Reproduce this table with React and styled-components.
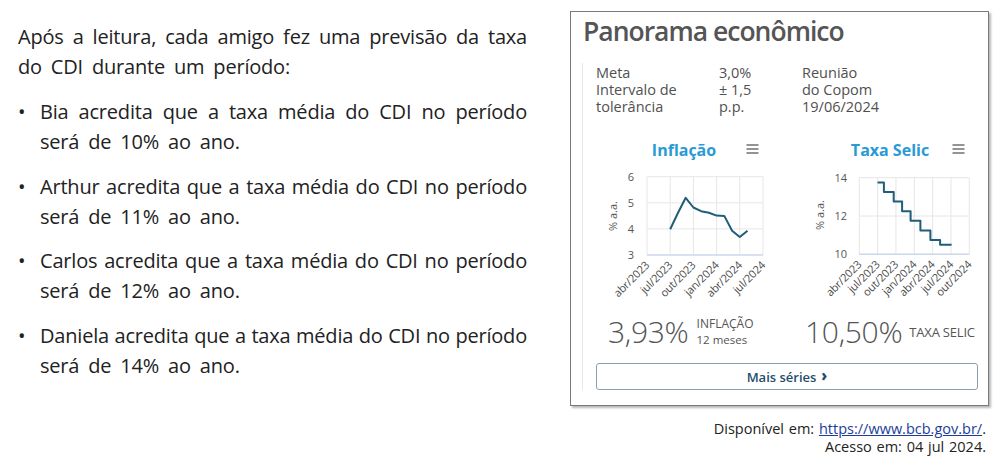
import React from "react";
import styled, { createGlobalStyle } from "styled-components";

const Global = createGlobalStyle`
  html, body { margin: 0; padding: 0; background: #fff; }
  body { font-family: "Open Sans", "Noto Sans", sans-serif; }
`;

const Page = styled.div`
  display: flex;
  align-items: flex-start;
  gap: 43px;
  padding-left: 18px;
  width: 1008px;
  height: 457px;
  box-sizing: border-box;
  overflow: hidden;
`;

const TextColumn = styled.div`
  width: 509px;
  margin-top: 22px;
  font-family: "Open Sans", sans-serif;
  font-size: 20px;
  line-height: 30px;
  color: #222;
  letter-spacing: -0.2px;
`;

const Para = styled.p`
  margin: 0;
`;

const Line = styled.span`
  display: block;
  text-align: justify;
  text-align-last: ${(p) => (p.$last ? "left" : "justify")};
  word-spacing: ${(p) => (p.$last ? "4px" : "0")};
`;

const List = styled.ul`
  list-style: none;
  margin: 15px 0 0;
  padding: 0;
  display: flex;
  flex-direction: column;
  gap: 14.5px;
`;

const Item = styled.li`
  display: flex;
`;

const Bullet = styled.span`
  flex: 0 0 22px;
`;

const ItemBody = styled.div`
  flex: 1;
`;

const Side = styled.div`
  margin-top: 11px;
  width: 419px;
  display: flex;
  flex-direction: column;
`;

const Panel = styled.section`
  box-sizing: border-box;
  width: 419px;
  height: 395px;
  border: 1px solid #7a7a7a;
  box-shadow: 2px 2px 2px rgba(0, 0, 0, 0.28);
  padding: 3px 10px 0 11px;
  background: #fff;
  font-family: "Open Sans", sans-serif;
  color: #555;
`;

const Title = styled.h1`
  margin: 0;
  padding-left: 1px;
  font-size: 26.5px;
  line-height: 32px;
  font-weight: 600;
  color: #555;
  letter-spacing: -1px;
`;

const Block = styled.div`
  margin-top: 16px;
  border-left: 1px solid #e8e8e8;
  padding: 1px 0 0 13px;
`;

const InfoGrid = styled.div`
  display: grid;
  grid-template-columns: 123px 83px auto;
  font-size: 14.5px;
  line-height: 17px;
  color: #505050;
`;

const ChartsRow = styled.div`
  display: flex;
  gap: 34px;
  margin-top: 25px;
  padding-left: 2px;
`;

const ChartCard = styled.div`
  width: 172px;
  display: flex;
  flex-direction: column;
`;

const ChartHead = styled.div`
  display: grid;
  grid-template-columns: 1fr auto 1fr;
  align-items: center;
  height: 20px;
  margin-bottom: 5px;
`;

const ChartTitle = styled.span`
  grid-column: 2;
  font-size: 16px;
  font-weight: 700;
  color: #2a9ad6;
  line-height: 20px;
`;

const MenuIcon = styled.svg`
  grid-column: 3;
  justify-self: end;
  margin-right: 11px;
  margin-top: -3px;
`;

const StatsRow = styled.div`
  display: grid;
  grid-template-columns: 209px 1fr;
  align-items: center;
  margin-top: 4px;
`;

const Stat = styled.div`
  display: flex;
  align-items: center;
  gap: ${(p) => p.$gap}px;
  padding-left: ${(p) => p.$indent}px;
  white-space: nowrap;
`;

const BigValue = styled.span`
  font-size: 30px;
  font-weight: 300;
  line-height: 36px;
  color: #555;
  letter-spacing: -0.3px;
`;

const StatLabel = styled.span`
  display: flex;
  flex-direction: column;
  font-size: ${(p) => p.$size}px;
  line-height: 16px;
  color: #555;
  letter-spacing: ${(p) => p.$track}px;
`;

const LabelLine = styled.span`
  display: block;
  height: ${(p) => p.$h}px;
  line-height: 16px;
`;

const SubLabel = styled.span`
  display: block;
  font-size: 11.5px;
  line-height: 16px;
  letter-spacing: 0;
`;

const MoreButton = styled.button`
  display: flex;
  align-items: center;
  justify-content: center;
  gap: 5px;
  width: 100%;
  height: 27px;
  margin-top: 13px;
  box-sizing: border-box;
  border: 1px solid #8d9eb0;
  border-radius: 3px;
  background: #fff;
  font-family: "Open Sans", sans-serif;
  font-size: 13px;
  font-weight: 600;
  color: #1e4e6c;
  padding: 0;
`;

const Chevron = styled.span`
  font-weight: 800;
  font-size: 15px;
  line-height: 13px;
  margin-top: -2px;
`;

const Citation = styled.div`
  margin-top: 14px;
  padding-right: 3px;
  text-align: right;
  font-family: "Open Sans", sans-serif;
  font-size: 14.5px;
  line-height: 18px;
  word-spacing: 1px;
  color: #222;
`;

const Link = styled.a`
  color: #1b3d9c;
  text-decoration: underline;
`;

const Menu = () => (
  <MenuIcon width="13" height="10" viewBox="0 0 13 10">
    <g stroke="#666" strokeWidth="1.4">
      <line x1="0.5" y1="1" x2="12.5" y2="1" />
      <line x1="0.5" y1="5" x2="12.5" y2="5" />
      <line x1="0.5" y1="9" x2="12.5" y2="9" />
    </g>
  </MenuIcon>
);

const AXIS_FONT = { fontFamily: "'Open Sans', sans-serif", fontSize: 11, fill: "#555" };
const XLABEL_FONT = {
  fontFamily: "'Open Sans', sans-serif",
  fontSize: 11,
  fill: "#4a4a4a",
  letterSpacing: "-0.2px",
};

function Plot({ x0, x1, y0, y1, xLabels, yTicks, yMin, yMax, yLabelX, yTitleX, yTitleY, path }) {
  const xs = xLabels.map((_, i) => x0 + ((x1 - x0) * i) / (xLabels.length - 1));
  const yOf = (v) => y1 - ((v - yMin) / (yMax - yMin)) * (y1 - y0);
  return (
    <svg width="172" height="145" viewBox="0 0 172 145">
      {xs.map((x, i) => (
        <line key={"v" + i} x1={x} x2={x} y1={y0} y2={y1} stroke="#e6e6e6" strokeWidth="1" />
      ))}
      {yTicks.map((v) =>
        v === yMin ? null : (
          <line key={"h" + v} x1={x0} x2={x1} y1={yOf(v)} y2={yOf(v)} stroke="#e6e6e6" strokeWidth="1" />
        )
      )}
      <line x1={x0} x2={x1} y1={y1} y2={y1} stroke="#ccd6eb" strokeWidth="1.5" />
      {yTicks.map((v) => (
        <text key={"yl" + v} x={yLabelX} y={yOf(v) + 4} textAnchor="end" style={AXIS_FONT}>
          {v}
        </text>
      ))}
      <text
        x={yTitleX}
        y={yTitleY}
        textAnchor="middle"
        transform={`rotate(-90 ${yTitleX} ${yTitleY})`}
        style={AXIS_FONT}
      >
        % a.a.
      </text>
      {xLabels.map((l, i) => (
        <text
          key={"xl" + i}
          x={xs[i] + 3}
          y={y1 + 11}
          textAnchor="end"
          transform={`rotate(-45 ${xs[i] + 3} ${y1 + 11})`}
          style={XLABEL_FONT}
        >
          {l}
        </text>
      ))}
      <path d={path(xs, yOf)} fill="none" stroke="#1f5d78" strokeWidth="2" strokeLinejoin="round" />
    </svg>
  );
}

const inflation = [3.99, 4.61, 5.19, 4.82, 4.68, 4.62, 4.51, 4.5, 3.93, 3.69, 3.93];

const inflationPath = (xs, yOf) => {
  const step = (xs[1] - xs[0]) / 3;
  return inflation
    .map((v, i) => `${i === 0 ? "M" : "L"}${(xs[1] + i * step).toFixed(1)} ${yOf(v).toFixed(1)}`)
    .join(" ");
};

const selicSteps = [
  [3.0, 13.75],
  [4.03, 13.25],
  [5.63, 12.75],
  [7.0, 12.25],
  [8.4, 11.75],
  [10.0, 11.25],
  [11.63, 10.75],
  [13.23, 10.5],
];

const selicPath = (xs, yOf) => {
  const perMonth = (xs[1] - xs[0]) / 3;
  const xm = (m) => (xs[0] + m * perMonth).toFixed(1);
  let d = `M${xm(selicSteps[0][0])} ${yOf(selicSteps[0][1]).toFixed(1)}`;
  for (let i = 1; i < selicSteps.length; i++) {
    d += ` H${xm(selicSteps[i][0])} V${yOf(selicSteps[i][1]).toFixed(1)}`;
  }
  d += ` H${xm(15.1)}`;
  return d;
};

const items = [
  ["Bia", "10%"],
  ["Arthur", "11%"],
  ["Carlos", "12%"],
  ["Daniela", "14%"],
];

export default function App() {
  return (
    <>
      <Global />
      <Page>
        <TextColumn>
          <Para>
            <Line>Após a leitura, cada amigo fez uma previsão da taxa</Line>
            <Line $last>do CDI durante um período:</Line>
          </Para>
          <List>
            {items.map(([name, pct]) => (
              <Item key={name}>
                <Bullet>•</Bullet>
                <ItemBody>
                  <Line>{name} acredita que a taxa média do CDI no período</Line>
                  <Line $last>será de {pct} ao ano.</Line>
                </ItemBody>
              </Item>
            ))}
          </List>
        </TextColumn>

        <Side>
          <Panel>
            <Title>Panorama econômico</Title>
            <Block>
              <InfoGrid>
                <span>Meta</span>
                <span>3,0%</span>
                <span>Reunião</span>
                <span>Intervalo de</span>
                <span>± 1,5</span>
                <span>do Copom</span>
                <span>tolerância</span>
                <span>p.p.</span>
                <span>19/06/2024</span>
              </InfoGrid>

              <ChartsRow>
                <ChartCard>
                  <ChartHead>
                    <ChartTitle>Inflação</ChartTitle>
                    <Menu />
                  </ChartHead>
                  <Plot
                    x0={49}
                    x1={165}
                    y0={11.7}
                    y1={90}
                    xLabels={["abr/2023", "jul/2023", "out/2023", "jan/2024", "abr/2024", "jul/2024"]}
                    yTicks={[3, 4, 5, 6]}
                    yMin={3}
                    yMax={6}
                    yLabelX={36}
                    yTitleX={19}
                    yTitleY={51}
                    path={inflationPath}
                  />
                </ChartCard>
                <ChartCard>
                  <ChartHead>
                    <ChartTitle>Taxa Selic</ChartTitle>
                    <Menu />
                  </ChartHead>
                  <Plot
                    x0={55.3}
                    x1={165.3}
                    y0={12.7}
                    y1={89.3}
                    xLabels={["abr/2023", "jul/2023", "out/2023", "jan/2024", "abr/2024", "jul/2024", "out/2024"]}
                    yTicks={[10, 12, 14]}
                    yMin={10}
                    yMax={14}
                    yLabelX={43}
                    yTitleX={20}
                    yTitleY={50}
                    path={selicPath}
                  />
                </ChartCard>
              </ChartsRow>

              <StatsRow>
                <Stat $gap={8} $indent={12}>
                  <BigValue>3,93%</BigValue>
                  <StatLabel $size={12} $track={0}>
                    <LabelLine $h={16}>INFLAÇÃO</LabelLine>
                    <SubLabel>12 meses</SubLabel>
                  </StatLabel>
                </Stat>
                <Stat $gap={7} $indent={0}>
                  <BigValue>10,50%</BigValue>
                  <StatLabel $size={13} $track={-0.2}>
                    <LabelLine $h={16}>TAXA SELIC</LabelLine>
                  </StatLabel>
                </Stat>
              </StatsRow>

              <MoreButton type="button">
                <span>Mais séries</span>
                <Chevron>›</Chevron>
              </MoreButton>
            </Block>
          </Panel>
          <Citation>
            Disponível em: <Link href="#">https://www.bcb.gov.br/</Link>.
            <br />
            Acesso em: 04 jul 2024.
          </Citation>
        </Side>
      </Page>
    </>
  );
}
